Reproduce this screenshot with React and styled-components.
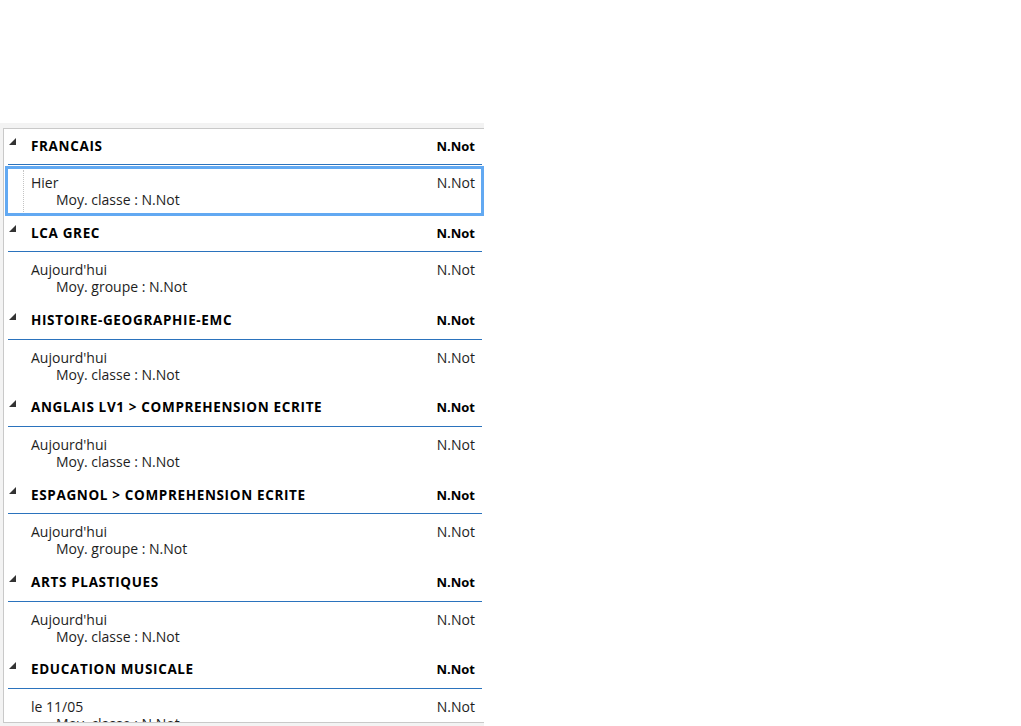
import React from "react";
import styled, { createGlobalStyle } from "styled-components";

const GlobalStyle = createGlobalStyle`
  html, body {
    margin: 0;
    padding: 0;
    background: #ffffff;
  }
  body {
    font-family: "Open Sans", "Noto Sans", sans-serif;
    color: #222;
  }
`;

const subjects = [
  { title: "FRANCAIS", date: "Hier", avg: "Moy. classe : N.Not", selected: true },
  { title: "LCA GREC", date: "Aujourd'hui", avg: "Moy. groupe : N.Not" },
  { title: "HISTOIRE-GEOGRAPHIE-EMC", date: "Aujourd'hui", avg: "Moy. classe : N.Not" },
  { title: "ANGLAIS LV1 > COMPREHENSION ECRITE", date: "Aujourd'hui", avg: "Moy. classe : N.Not" },
  { title: "ESPAGNOL > COMPREHENSION ECRITE", date: "Aujourd'hui", avg: "Moy. groupe : N.Not" },
  { title: "ARTS PLASTIQUES", date: "Aujourd'hui", avg: "Moy. classe : N.Not" },
  { title: "EDUCATION MUSICALE", date: "le 11/05", avg: "Moy. classe : N.Not" },
];

const App = () => {
  return (
    <>
      <GlobalStyle />
      <Page>
        <Frame>
          <Panel>
            {subjects.map((s) => (
              <Group key={s.title}>
                <Header>
                  <Toggle />
                  <Title>{s.title}</Title>
                  <HeaderMark>N.Not</HeaderMark>
                </Header>
                <Item selected={s.selected}>
                  <Gutter selected={s.selected} />
                  <Body>
                    <Line>
                      <span>{s.date}</span>
                      <Mark>N.Not</Mark>
                    </Line>
                    <Average>{s.avg}</Average>
                  </Body>
                </Item>
              </Group>
            ))}
          </Panel>
        </Frame>
      </Page>
    </>
  );
};

export default App;

const Page = styled.div`
  padding-top: 123px;
  height: 726px;
  box-sizing: border-box;
`;

const Frame = styled.div`
  width: 484px;
  height: 603px;
  box-sizing: border-box;
  background: #f3f3f3;
  padding: 5px 0 0 3px;
`;

const Panel = styled.div`
  height: 595px;
  box-sizing: border-box;
  background: #ffffff;
  border: 1px solid #c9c9c9;
  border-right: none;
  overflow: hidden;
`;

const Group = styled.div`
  display: flex;
  flex-direction: column;
`;

const Header = styled.div`
  display: flex;
  align-items: center;
  height: 36px;
  padding-bottom: 2px;
  box-sizing: border-box;
  margin: 0 2px 0 4px;
  border-bottom: 1px solid #2b73bd;
  color: #000;
  font-size: 13px;
  font-weight: 700;
`;

const Toggle = styled.span`
  width: 0;
  height: 0;
  margin: 0 15px 8px 1px;
  border-style: solid;
  border-width: 0 0 7px 7px;
  border-color: transparent transparent #333 transparent;
`;

const Title = styled.span`
  flex: 1;
  font-size: 13.5px;
  letter-spacing: 0.65px;
`;

const HeaderMark = styled.span`
  padding-right: 7px;
`;

const Item = styled.div`
  display: flex;
  height: 50.33px;
  margin: 1px 0 0 1px;
  box-sizing: border-box;
  border: 3px solid ${(p) => (p.selected ? "#62a9f2" : "transparent")};
`;

const Gutter = styled.div`
  width: 15px;
  margin: 1px 0;
  border-right: 1px dotted ${(p) => (p.selected ? "#c4c4c4" : "transparent")};
`;

const Body = styled.div`
  flex: 1;
  padding: 5px 6px 0 7px;
  font-size: 14px;
  line-height: 17px;
  color: #1e1e1e;
`;

const Line = styled.div`
  display: flex;
  justify-content: space-between;
`;

const Mark = styled.span``;

const Average = styled.div`
  padding-left: 25px;
`;
